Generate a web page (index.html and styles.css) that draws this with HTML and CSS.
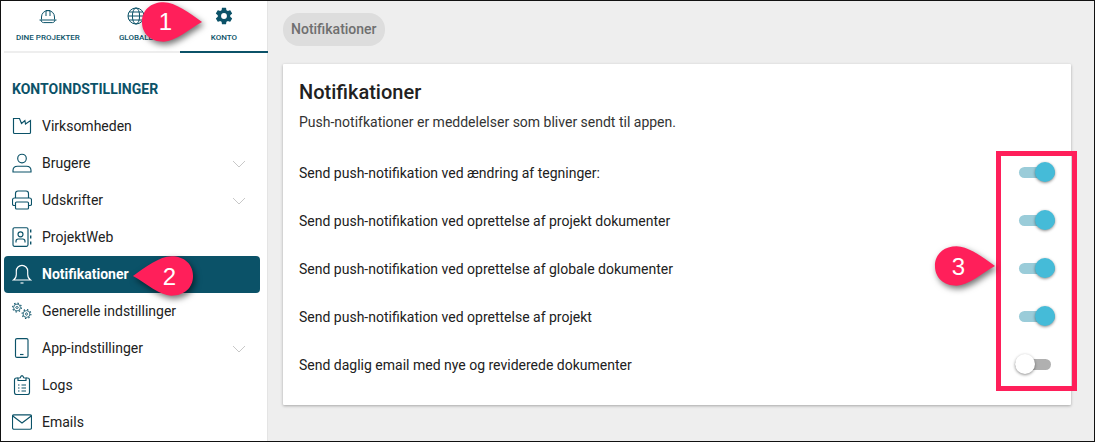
FILE: index.html
```html
<!DOCTYPE html>
<html lang="da">
<head>
<meta charset="utf-8">
<title>Notifikationer</title>
<link rel="stylesheet" href="styles.css">
</head>
<body>
<div class="app">
  <aside class="sidebar">
    <nav class="tabs">
      <div class="tab">
        <svg class="tab-icon" viewBox="0 0 20 20" fill="none" stroke="#0b5268" stroke-width="1"><path d="M3.500 13.500V11a6.500 6.500 0 0 1 13 0v2.500"/><path d="M8 4.800V10M12 4.800V10M8 4.600h4"/><path d="M1.500 14h17M3 14c.3 1.800 1.200 2.600 2.600 2.600h8.800c1.400 0 2.300-.8 2.600-2.600"/></svg>
        <span>DINE PROJEKTER</span>
      </div>
      <div class="tab">
        <svg class="tab-icon" viewBox="0 0 20 20" fill="none" stroke="#0b5268" stroke-width="1"><circle cx="10" cy="10" r="8"/><ellipse cx="10" cy="10" rx="3.600" ry="8"/><path d="M2 10h16M3.300 6h13.400M3.300 14h13.400"/></svg>
        <span>GLOBALE</span>
      </div>
      <div class="tab tab-active">
        <svg class="tab-icon" viewBox="0 0 24 24" fill="#0b5268"><path d="M12 15.500A3.500 3.500 0 1 1 12 8.500a3.500 3.500 0 0 1 0 7zm7.430-2.530c.04-.32.07-.64.07-.97s-.03-.66-.07-1l2.110-1.630c.19-.15.240-.42.120-.64l-2-3.460c-.12-.22-.39-.31-.61-.22l-2.490 1c-.52-.39-1.060-.73-1.690-.98l-.37-2.650A.506.506 0 0 0 14 2h-4c-.25 0-.46.180-.5.420l-.37 2.650c-.63.250-1.170.590-1.690.980l-2.490-1c-.22-.09-.49 0-.61.220l-2 3.460c-.13.220-.07.490.12.640L4.570 11c-.04.340-.07.670-.07 1s.03.650.07.970l-2.110 1.660c-.19.150-.25.420-.12.640l2 3.460c.12.220.39.300.61.220l2.490-1.010c.52.400 1.060.740 1.690.990l.37 2.650c.04.240.25.420.5.420h4c.25 0 .46-.18.5-.42l.37-2.650c.63-.26 1.170-.59 1.690-.99l2.490 1.010c.22.080.49 0 .61-.22l2-3.460c.12-.22.07-.49-.12-.64l-2.110-1.660z"/></svg>
        <span>KONTO</span>
      </div>
    </nav>
    <h2 class="menu-title">KONTOINDSTILLINGER</h2>
    <ul class="menu">
      <li class="item">
        <svg class="icon" viewBox="0 0 20 20"><path d="M1.500 2.500v14c0 .6.400 1 1 1h15c.6 0 1-.4 1-1V4.500l-5 3.500-.6-3.500L9.500 7.500l-2-5z"/></svg>
        <span class="label">Virksomheden</span>
      </li>
      <li class="item">
        <svg class="icon" viewBox="0 0 20 20"><circle cx="10" cy="5.500" r="4.300"/><path d="M1 19v-1.500c0-3 2-4.300 4.500-4.300h9c2.500 0 4.500 1.300 4.500 4.300V19z"/></svg>
        <span class="label">Brugere</span>
        <svg class="chev" viewBox="0 0 14 8"><path d="M1 1l6 6 6-6"/></svg>
      </li>
      <li class="item">
        <svg class="icon" viewBox="0 0 20 20"><path d="M3.500 8V3.500C3.500 2.300 4.500 1 6 1h8c1.500 0 2.500 1.300 2.500 2.500V8"/><path d="M3.500 15.500H2c-.9 0-1.500-.6-1.500-1.500v-4c0-1.200.8-2 2-2h15c1.200 0 2 .8 2 2v4c0 .9-.6 1.500-1.500 1.500h-1.500"/><rect x="3.500" y="12" width="13" height="7" rx="1"/></svg>
        <span class="label">Udskrifter</span>
        <svg class="chev" viewBox="0 0 14 8"><path d="M1 1l6 6 6-6"/></svg>
      </li>
      <li class="item">
        <svg class="icon" viewBox="0 0 20 20"><rect x="1" y="0.700" width="15" height="18.600" rx="1.500"/><circle cx="8.500" cy="7.300" r="2.500"/><path d="M4 15.500v-1.300c0-1.400 1-2.200 2.200-2.200h4.600c1.200 0 2.200.8 2.200 2.200v1.300"/><path d="M18.700 2.500v3M18.700 8.500v3M18.700 14.500v3" stroke-width="1.400"/></svg>
        <span class="label">ProjektWeb</span>
      </li>
      <li class="item item-active">
        <svg class="icon" viewBox="0 0 20 20"><path d="M1.500 16c1.800-1.300 2.800-3 2.800-5.500V7a5.700 5.700 0 0 1 11.400 0v3.500c0 2.500 1 4.200 2.800 5.500z"/><path d="M8.500 19h3"/></svg>
        <span class="label">Notifikationer</span>
      </li>
      <li class="item">
        <svg class="icon" viewBox="0 0 20 20"><circle cx="5" cy="6.500" r="3.400" stroke-width=".8"/><circle cx="5" cy="6.500" r="4.400" stroke-width="1.100" stroke-dasharray="1.400 2.050"/><ellipse cx="5" cy="6.500" rx="1.300" ry=".9" stroke-width=".8"/><circle cx="14.500" cy="13" r="3.400" stroke-width=".8"/><circle cx="14.500" cy="13" r="4.400" stroke-width="1.100" stroke-dasharray="1.400 2.050"/><ellipse cx="14.500" cy="13" rx=".9" ry="1.300" stroke-width=".8"/></svg>
        <span class="label">Generelle indstillinger</span>
      </li>
      <li class="item">
        <svg class="icon" viewBox="0 0 20 20"><rect x="3.500" y="0.600" width="12.500" height="18.800" rx="1.500"/><path d="M8 16.500h3.500"/></svg>
        <span class="label">App-indstillinger</span>
        <svg class="chev" viewBox="0 0 14 8"><path d="M1 1l6 6 6-6"/></svg>
      </li>
      <li class="item">
        <svg class="icon" viewBox="0 0 20 20"><path d="M6 3H4.500C3.300 3 2.500 3.800 2.500 5v12.500c0 1.100.8 2 2 2h11c1.200 0 2-.9 2-2V5c0-1.200-.8-2-2-2H14"/><path d="M6 5.500V3l2.300-.3C8.700 1.200 9.200.6 10 .6s1.300.6 1.700 2.100L14 3v2.500z"/><path d="M6 10h1.500M9.500 10h4.500M6 13h1.500M9.500 13h4.500M6 16h1.500M9.500 16h4.500"/></svg>
        <span class="label">Logs</span>
      </li>
      <li class="item">
        <svg class="icon" viewBox="0 0 20 20"><rect x="0.500" y="2.800" width="19" height="14.400" rx="1.500"/><path d="M.8 4l9.200 7 9.200-7"/></svg>
        <span class="label">Emails</span>
      </li>
    </ul>
  </aside>
  <main class="main">
    <div class="crumb">Notifikationer</div>
    <section class="card">
      <h1 class="card-title">Notifikationer</h1>
      <p class="card-sub">Push-notifkationer er meddelelser som bliver sendt til appen.</p>
      <div class="rows">
        <div class="row"><span class="row-text">Send push-notifikation ved ændring af tegninger:</span><span class="switch on"></span></div>
        <div class="row"><span class="row-text">Send push-notifikation ved oprettelse af projekt dokumenter</span><span class="switch on"></span></div>
        <div class="row"><span class="row-text">Send push-notifikation ved oprettelse af globale dokumenter</span><span class="switch on"></span></div>
        <div class="row"><span class="row-text">Send push-notifikation ved oprettelse af projekt</span><span class="switch on"></span></div>
        <div class="row"><span class="row-text">Send daglig email med nye og reviderede dokumenter</span><span class="switch"></span></div>
      </div>
    </section>
  </main>
</div>

<div class="frame-mark"></div>

<div class="callout callout-1">
  <svg viewBox="0 0 64 42"><path d="M2 21C2 9 11 1 24 1c12 0 26 11 39 20-13 7-27 20-39 20C11 41 2 33 2 21z"/></svg>
  <span>1</span>
</div>
<div class="callout callout-2">
  <svg viewBox="0 0 64 42"><path d="M62 21C62 9 53 1 40 1 28 1 14 12 1 21c13 7 27 20 39 20 13 0 22-8 22-20z"/></svg>
  <span>2</span>
</div>
<div class="callout callout-3">
  <svg viewBox="0 0 64 42"><path d="M2 21C2 9 11 1 24 1c12 0 26 11 39 20-13 7-27 20-39 20C11 41 2 33 2 21z"/></svg>
  <span>3</span>
</div>
</body>
</html>
```

FILE: styles.css
```css
* { box-sizing: border-box; }
html, body { margin: 0; padding: 0; height: 100%; overflow: hidden; }
body { font-family: Roboto, "Liberation Sans", sans-serif; color: #212121; background: #eeeeee; }

.app {
  display: flex;
  width: 1095px;
  height: 442px;
  border: 1px solid #111;
  overflow: hidden;
}

.sidebar {
  width: 267px;
  flex: none;
  background: #fff;
  border-right: 1px solid #e4e4e4;
}

.tabs {
  display: flex;
  height: 52px;
  margin-left: 3px;
  border-bottom: 2px solid #eeeeee;
}
.tab {
  width: 88px;
  height: 52px;
  flex: none;
  display: flex;
  flex-direction: column;
  align-items: center;
  padding-top: 5px;
  font-size: 8px;
  font-weight: 500;
  color: #0b5268;
}
.tab-icon { width: 20px; height: 20px; display: block; margin-bottom: 7px; }
.tab-active { border-bottom: 2px solid #0b5268; }

.menu-title {
  margin: 28px 0 0 11px;
  font-size: 14px;
  line-height: 16px;
  font-weight: 700;
  color: #0b5268;
}

.menu { list-style: none; margin: 11px 0 0 3px; padding: 0; width: 256px; }
.item {
  height: 37px;
  display: flex;
  align-items: center;
  padding: 0 14px 2px 8px;
  font-size: 14px;
  color: #212121;
  font-weight: 400;
}
.label { margin-left: 10px; flex: 1; }
.icon {
  width: 20px;
  height: 20px;
  flex: none;
  fill: none;
  stroke: #0b5268;
  stroke-width: 1.150;
}
.chev { width: 14px; height: 8px; fill: none; stroke: #c8c8c8; stroke-width: 1; flex: none; margin-top: 3px; }
.item-active {
  background: #0b5268;
  color: #fff;
  border-radius: 4px;
  font-weight: 700;
}
.item-active .icon { stroke: #fff; }

.main { flex: 1; min-width: 0; padding: 12px 23px 0 15px; }
.crumb {
  display: inline-block;
  height: 33px;
  padding: 0 8px;
  line-height: 33px;
  font-size: 14px;
  font-weight: 500;
  color: #6f6f6f;
  background: #dddddd;
  border-radius: 16px;
  vertical-align: top;
}
.card {
  margin-top: 18px;
  height: 341px;
  background: #fff;
  padding: 16px 16px 0;
  box-shadow: 0 1px 3px rgba(0,0,0,.3);
  border-radius: 1px;
}
.card-title { margin: 0; font-size: 20px; line-height: 24px; font-weight: 500; color: #212121; }
.card-sub { margin: 8px 0 0; font-size: 14px; line-height: 20px; color: #333; }
.rows { margin-top: 16px; }
.row {
  height: 48px;
  display: flex;
  align-items: center;
  justify-content: space-between;
  font-size: 14px;
  color: #212121;
}
.row-text { margin-top: 2px; }

.switch {
  position: relative;
  width: 36px;
  height: 11px;
  border-radius: 6px;
  background: #b0b0b0;
  flex: none;
  margin-right: 4px;
}
.switch::after {
  content: "";
  position: absolute;
  top: -5px;
  left: 0;
  width: 20px;
  height: 20px;
  border-radius: 50%;
  background: #fff;
  box-shadow: 0 1px 3px rgba(0,0,0,.45);
}
.switch.on { background: #9accd9; margin-right: 0; }
.switch.on::after { left: auto; right: 0; background: #45bbd8; }

.frame-mark {
  position: absolute;
  left: 996px;
  top: 151px;
  width: 81px;
  height: 240px;
  border: 5px solid #ff1f5a;
}

.callout {
  position: absolute;
  width: 63px;
  height: 42px;
  display: flex;
  align-items: center;
  justify-content: center;
  color: #fff;
  font-size: 24px;
  font-family: "Liberation Sans", Arial, sans-serif;
}
.callout svg {
  position: absolute;
  inset: 0;
  width: 100%;
  height: 100%;
  fill: #ff1f5a;
  filter: drop-shadow(2px 3px 3px rgba(0,0,0,.55));
  overflow: visible;
}
.callout span { position: relative; }
.callout-1 { left: 140px; top: 1px; }
.callout-1 span { left: -6px; }
.callout-2 { left: 132px; top: 255px; }
.callout-2 span { left: 6px; top: 1px; }
.callout-3 { left: 933px; top: 245px; }
.callout-3 span { left: -6px; top: 1px; }
```
